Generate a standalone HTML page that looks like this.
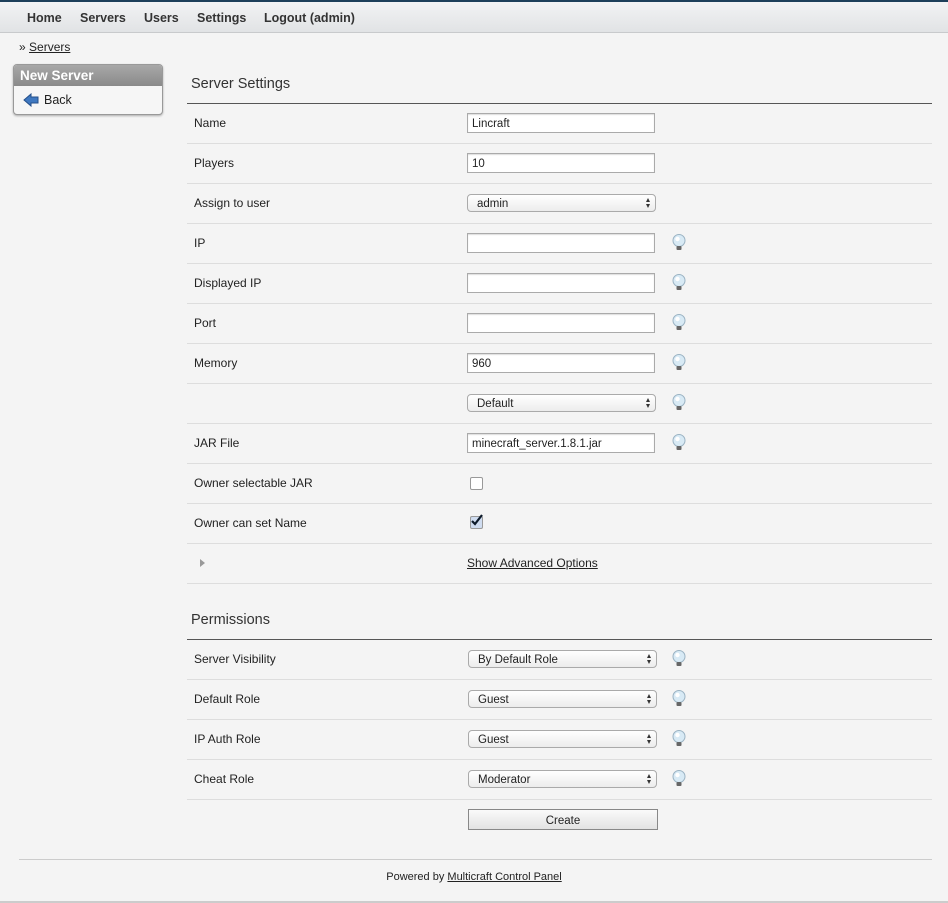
<!DOCTYPE html>
<html><head><style>
body{margin:0;background:#f4f4f4;font-family:"Liberation Sans",Arial,sans-serif;font-size:12px;color:#222;width:948px;height:903px;position:relative;overflow:hidden}
.nav{position:absolute;left:0;top:0;width:948px;height:33px;border-top:2px solid #1d3f5a;box-sizing:border-box;background:linear-gradient(#f2f3f4,#e1e3e5);border-bottom:1px solid #c8cacc}
.nav span{position:absolute;top:9px;font-weight:bold;font-size:12.5px;color:#333}
.a{position:absolute}
.box{left:13px;top:64px;width:148px;height:49px;border:1px solid #999;border-radius:4px;background:#f6f6f6;box-shadow:0 1px 2px rgba(0,0,0,.3);overflow:hidden}
.box .h{height:21px;background:linear-gradient(#a8a8a8,#8a8a8a);color:#fff;font-weight:bold;font-size:13.5px;padding:3px 0 0 6px;box-sizing:border-box}
h2{position:absolute;left:191px;margin:0;font-weight:normal;font-size:14.5px;color:#333}
.rule{position:absolute;left:187px;width:745px;height:1px;background:#555}
.line{position:absolute;left:187px;width:745px;height:1px;background:#ddd}
.lbl{position:absolute;left:194px;font-size:12px;color:#222}
.inp{position:absolute;left:467px;width:188px;height:20px;border:1px solid #aaa;background:#fff;box-sizing:border-box;font-size:11.5px;padding:4px 0 0 4px;box-shadow:inset 0 1px 1px #ddd}
.sel{position:absolute;left:467px;width:189px;height:18px;border:1px solid #aaa;border-radius:4px;background:linear-gradient(#fff,#ececec);box-sizing:border-box;font-size:11.5px;padding:3px 0 0 9px}
.sel:after{content:"";position:absolute;right:5px;top:3px;border-left:2.5px solid transparent;border-right:2.5px solid transparent;border-bottom:4px solid #333}
.sel:before{content:"";position:absolute;right:5px;top:9px;border-left:2.5px solid transparent;border-right:2.5px solid transparent;border-top:4px solid #333}
.bulb{position:absolute;left:671px;width:16px;height:17px}
.cb{position:absolute;left:470px;width:11px;height:11px;border:1px solid #999;border-radius:2px;background:#fff}
</style></head><body>
<div class="nav"><span style="left:27px">Home</span><span style="left:80px">Servers</span><span style="left:144px">Users</span><span style="left:197px">Settings</span><span style="left:264px">Logout (admin)</span></div>
<div class="a" style="left:19px;top:40px">» <u>Servers</u></div>
<div class="a box"><div class="h">New Server</div>
<svg class="a" style="left:9px;top:28px" width="16" height="14" viewBox="0 0 16 14"><path d="M1 7L8 1V4H15V10H8V13Z" fill="#3f78c0" stroke="#244f8a"/></svg>
<div class="a" style="left:30px;top:28px;font-size:12.5px">Back</div></div>
<h2 style="top:76px">Server Settings</h2><div class="rule" style="top:103px"></div>
<div class="lbl" style="top:116px">Name</div><div class="inp" style="top:113px">Lincraft</div><div class="line" style="top:143px"></div>
<div class="lbl" style="top:156px">Players</div><div class="inp" style="top:153px">10</div><div class="line" style="top:183px"></div>
<div class="lbl" style="top:196px">Assign to user</div><div class="sel" style="top:194px">admin</div><div class="line" style="top:223px"></div>
<div class="lbl" style="top:236px">IP</div><div class="inp" style="top:233px"></div><div class="line" style="top:263px"></div>
<div class="lbl" style="top:276px">Displayed IP</div><div class="inp" style="top:273px"></div><div class="line" style="top:303px"></div>
<div class="lbl" style="top:316px">Port</div><div class="inp" style="top:313px"></div><div class="line" style="top:343px"></div>
<div class="lbl" style="top:356px">Memory</div><div class="inp" style="top:353px">960</div><div class="line" style="top:383px"></div>
<div class="sel" style="top:394px">Default</div><div class="line" style="top:423px"></div>
<div class="lbl" style="top:436px">JAR File</div><div class="inp" style="top:433px">minecraft_server.1.8.1.jar</div><div class="line" style="top:463px"></div>
<div class="lbl" style="top:476px">Owner selectable JAR</div><div class="cb" style="top:477px"></div><div class="line" style="top:503px"></div>
<div class="lbl" style="top:516px">Owner can set Name</div><div class="cb" style="top:516px;background:#cfdcf0"></div>
<svg class="a" style="left:470px;top:513px" width="14" height="14" viewBox="0 0 14 14"><path d="M2 8L5 11L12 2" fill="none" stroke="#0d1a2a" stroke-width="2.2"/></svg>
<div class="line" style="top:543px"></div>
<div class="a" style="left:200px;top:559px;border-left:5px solid #999;border-top:4px solid transparent;border-bottom:4px solid transparent;width:0;height:0"></div>
<div class="a" style="left:467px;top:556px"><u>Show Advanced Options</u></div><div class="line" style="top:583px"></div>
<h2 style="top:612px">Permissions</h2><div class="rule" style="top:639px"></div>
<div class="lbl" style="top:652px">Server Visibility</div><div class="sel" style="top:650px;left:468px">By Default Role</div><div class="line" style="top:679px"></div>
<div class="lbl" style="top:692px">Default Role</div><div class="sel" style="top:690px;left:468px">Guest</div><div class="line" style="top:719px"></div>
<div class="lbl" style="top:732px">IP Auth Role</div><div class="sel" style="top:730px;left:468px">Guest</div><div class="line" style="top:759px"></div>
<div class="lbl" style="top:772px">Cheat Role</div><div class="sel" style="top:770px;left:468px">Moderator</div><div class="line" style="top:799px"></div>
<div class="a" style="left:468px;top:809px;width:190px;height:21px;border:1px solid #888;box-sizing:border-box;background:linear-gradient(#fafafa,#e2e2e2);text-align:center;font-size:11.5px;padding-top:5px">Create</div>
<div class="a" style="left:19px;top:859px;width:913px;height:1px;background:#ccc"></div>
<div class="a" style="left:0;width:948px;top:871px;text-align:center;font-size:11px">Powered by <u>Multicraft Control Panel</u></div>
<div class="a" style="left:0;top:901px;width:948px;height:2px;background:#ccc"></div>
<svg width="0" height="0" style="position:absolute"><defs><g id="b"><circle cx="8" cy="6.5" r="6" fill="#d8eaf5" stroke="#9bb3c3"/><circle cx="6.5" cy="5" r="2.2" fill="#fff"/><rect x="5.5" y="12" width="5" height="4" rx="1" fill="#666"/></g></defs></svg>
<svg class="bulb" style="top:234px"><use href="#b"/></svg>
<svg class="bulb" style="top:274px"><use href="#b"/></svg>
<svg class="bulb" style="top:314px"><use href="#b"/></svg>
<svg class="bulb" style="top:354px"><use href="#b"/></svg>
<svg class="bulb" style="top:394px"><use href="#b"/></svg>
<svg class="bulb" style="top:434px"><use href="#b"/></svg>
<svg class="bulb" style="top:650px"><use href="#b"/></svg>
<svg class="bulb" style="top:690px"><use href="#b"/></svg>
<svg class="bulb" style="top:730px"><use href="#b"/></svg>
<svg class="bulb" style="top:770px"><use href="#b"/></svg>
</body></html>
